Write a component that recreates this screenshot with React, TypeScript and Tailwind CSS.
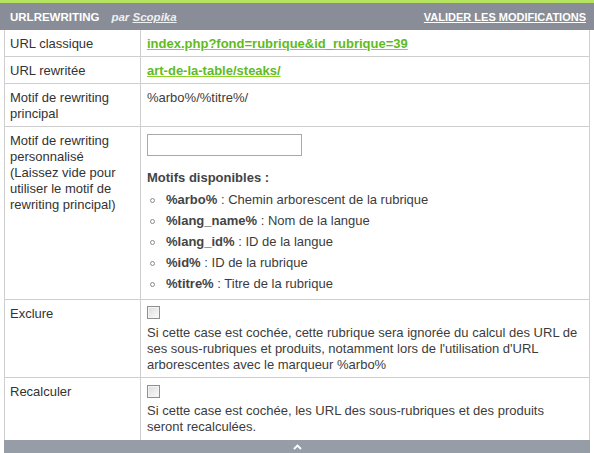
import React from "react";

const motifs = [
  { key: "%arbo%", label: "Chemin arborescent de la rubrique" },
  { key: "%lang_name%", label: "Nom de la langue" },
  { key: "%lang_id%", label: "ID de la langue" },
  { key: "%id%", label: "ID de la rubrique" },
  { key: "%titre%", label: "Titre de la rubrique" },
];

const Checkbox = () => (
  <span className="block w-[13px] h-[13px] border border-[#8f8f8f] bg-gradient-to-br from-[#dcdcdc] to-[#fbfbfb] shadow-[inset_0_0_0_1px_#f4f4f4]" />
);

const Row = ({
  label,
  children,
  last = false,
  pb = "pb-[4px]",
}: {
  label: React.ReactNode;
  children: React.ReactNode;
  last?: boolean;
  pb?: string;
}) => (
  <div className={`grid grid-cols-[136px_1fr] ${last ? "" : "border-b border-[#cfcfcf]"}`}>
    <div className="border-r border-[#cfcfcf] pl-[5px] pr-[14px] pt-[6px] pb-[4px] text-[#333]">{label}</div>
    <div className={`pl-[6px] pr-[6px] pt-[6px] ${pb} text-[#3c3c3c]`}>{children}</div>
  </div>
);

const App = () => {
  return (
    <div className="w-[594px] h-[453px] overflow-hidden bg-white font-['Liberation_Sans',Arial,sans-serif] text-[13px] leading-[16px]">
      {/* Top bar */}
      <div className="h-[3px] bg-[#b6e35f]" />
      <div className="h-[27px] bg-[#888d97] flex items-center justify-between pl-[10px] pr-[8px] text-[11.5px] font-bold text-white">
        <div className="flex items-center">
          <span>URLREWRITING</span>
          <span className="ml-[12px] italic text-[#eef0f2]">
            par <span className="underline">Scopika</span>
          </span>
        </div>
        <a className="underline text-[11px] cursor-pointer">VALIDER LES MODIFICATIONS</a>
      </div>

      {/* Form table */}
      <div className="mx-[4px] border-x border-[#cfcfcf]">
        <Row label="URL classique">
          <a className="font-bold text-[#5fbb1d] underline decoration-[#8fd12a]">
            index.php?fond=rubrique&amp;id_rubrique=39
          </a>
        </Row>
        <Row label="URL rewritée">
          <a className="font-bold text-[#5fbb1d] underline decoration-[#8fd12a]">art-de-la-table/steaks/</a>
        </Row>
        <Row label="Motif de rewriting principal">%arbo%/%titre%/</Row>
        <Row label="Motif de rewriting personnalisé (Laissez vide pour utiliser le motif de rewriting principal)">
          <div className="pt-[1px]">
            <input type="text" className="block w-[155px] h-[22px] border border-[#a9a9a9] bg-white outline-none" />
            <div className="mt-[14px] font-bold text-[#444]">Motifs disponibles :</div>
            <ul className="mt-[6px] flex flex-col gap-[5px] pb-[3px]">
              {motifs.map((m) => (
                <li key={m.key} className="flex items-center">
                  <span className="ml-[3px] w-[5px] h-[5px] rounded-full border border-[#8a8a8a]" />
                  <span className="ml-[11px]">
                    <b className="text-[#444]">{m.key}</b> : {m.label}
                  </span>
                </li>
              ))}
            </ul>
          </div>
        </Row>
        <Row label="Exclure">
          <div className="pb-[6px]">
            <Checkbox />
          </div>
          <div>
            Si cette case est cochée, cette rubrique sera ignorée du calcul des URL de ses sous-rubriques et
            produits, notamment lors de l'utilisation d'URL arborescentes avec le marqueur %arbo%
          </div>
        </Row>
        <Row label="Recalculer" last pb="pb-[5px]">
          <div className="pt-[1px] pb-[5px]">
            <Checkbox />
          </div>
          <div>Si cette case est cochée, les URL des sous-rubriques et des produits seront recalculées.</div>
        </Row>
      </div>

      {/* Footer bar */}
      <div className="mx-[4px] h-[20px] bg-[#979da6] flex justify-center pt-[4px]">
        <svg width="9" height="6" viewBox="0 0 9 6">
          <path d="M1 5 L4.5 1.5 L8 5" fill="none" stroke="#ffffff" strokeWidth="1.8" />
        </svg>
      </div>
    </div>
  );
};

export default App;
